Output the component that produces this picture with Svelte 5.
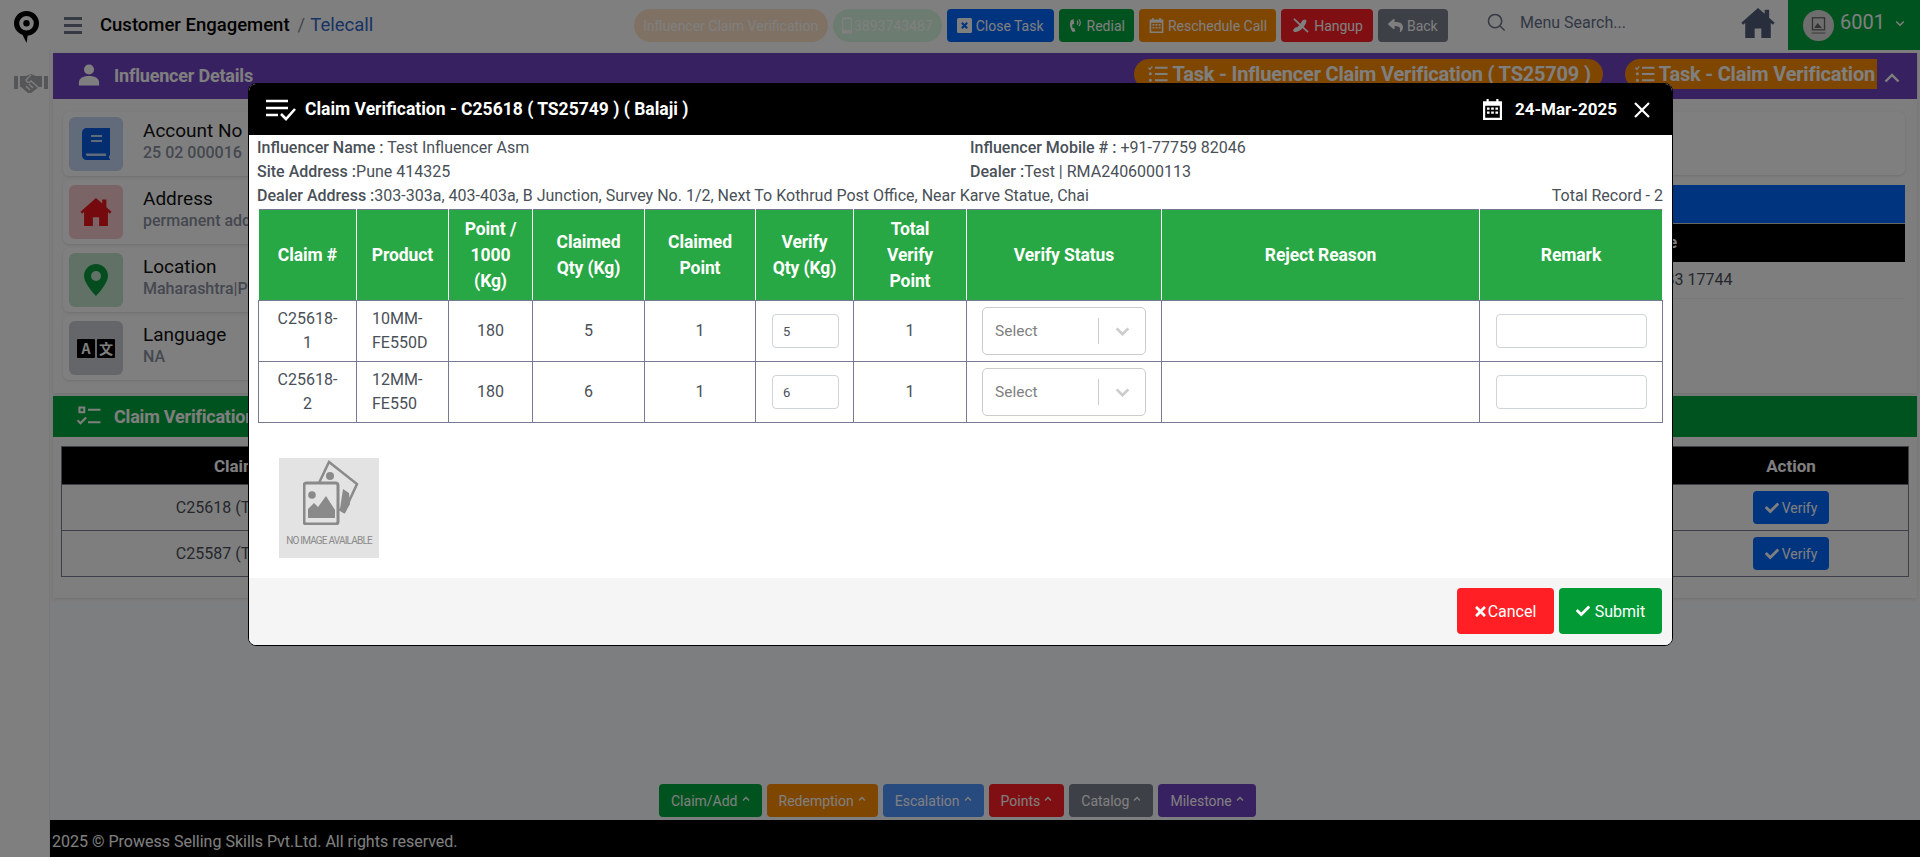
<script>
  const d = {
    check: "M173.9 439.4 7.5 273c-10-10-10-26.2 0-36.2l36.2-36.2c10-10 26.2-10 36.2 0L192 312.7 432.1 72.6c10-10 26.2-10 36.2 0l36.2 36.2c10 10 10 26.2 0 36.2L210.1 439.4c-10 10-26.2 10-36.2 0z",
    reply: "M8.309 189.836L184.313 37.851C199.719 24.546 224 35.347 224 56.015v80.053c160.629 1.839 288 34.032 288 186.258 0 61.441-39.581 122.309-83.333 154.132-13.653 9.931-33.111-2.533-28.077-18.631 45.344-145.012-21.507-183.51-176.59-185.742V360c0 20.7-24.3 31.453-39.687 18.164l-176.004-152c-11.071-9.562-11.086-26.753 0-36.328z",
    home: "M256 40 16 252l26 30 30-26v216h136V336h96v136h136V256l30 26 26-30-80-71V64h-64v60z",
    calendar: "M120 20h50v50h172V20h50v50h80v422H40V70h80zM90 170v272h332V170zM130 210h60v50h-60zM226 210h60v50h-60zM322 210h60v50h-60zM130 300h60v50h-60zM226 300h60v50h-60zM322 300h60v50h-60z",
    tasks: "M20 80l30 30 50-60 24 20-72 88-56-54zM180 70h320v50H180zM180 230h320v50H180zM180 390h320v50H180zM20 250a40 40 0 1 0 80 0 40 40 0 1 0-80 0zM20 415a40 40 0 1 0 80 0 40 40 0 1 0-80 0z"
  };

  const headerButtons = [
    { label: "Close Task", cls: "blue", icon: "close" },
    { label: "Redial", cls: "green tight", icon: "redial" },
    { label: "Reschedule Call", cls: "orange tight-r", icon: "calendar" },
    { label: "Hangup", cls: "red", icon: "hangup" },
    { label: "Back", cls: "grey", icon: "reply" }
  ];

  const infoCards = [
    { title: "Account No", value: "25 02 000016", tone: "tone-blue", icon: "book" },
    { title: "Address", value: "permanent address", tone: "tone-red", icon: "house" },
    { title: "Location", value: "Maharashtra|Pune", tone: "tone-green", icon: "pin" },
    { title: "Language", value: "NA", tone: "tone-grey", icon: "lang" }
  ];

  const claimRows = [
    { claim: "C25618-1", product: "10MM-FE550D", rate: 180, qty: 5, point: 1, verify: 5, total: 1 },
    { claim: "C25618-2", product: "12MM-FE550", rate: 180, qty: 6, point: 1, verify: 6, total: 1 }
  ];

  const listRows = ["C25618 (TS25749)", "C25587 (TS25709)"];

  const dock = [
    { label: "Claim/Add", cls: "green" },
    { label: "Redemption", cls: "orange" },
    { label: "Escalation", cls: "sky" },
    { label: "Points", cls: "red" },
    { label: "Catalog", cls: "grey" },
    { label: "Milestone", cls: "purple" }
  ];
</script>

{#snippet checkIcon()}
  <svg class="ic-check" viewBox="0 0 512 512"><path fill="currentColor" d={d.check} /></svg>
{/snippet}

{#snippet tasksIcon()}
  <svg class="ic-tasks" viewBox="0 0 512 512"><path fill="currentColor" d={d.tasks} /></svg>
{/snippet}

<div class="page">
  <header class="topbar">
    <svg class="logo" viewBox="0 0 25 32">
      <path fill="#000" fill-rule="evenodd" d="M12.5 0C5.5 0 0 5.5 0 12.2c0 5.6 3.6 9.8 8.5 11.600L12.600 32l1-7.300C20 24 25 19 25 12.200 25 5.500 19.500 0 12.500 0zM12.500 5a7.300 7.300 0 1 1 0 14.600 7.300 7.300 0 0 1 0-14.600z" />
      <circle cx="12.500" cy="12.300" r="3.200" fill="#000" />
    </svg>
    <div class="burger"><i></i><i></i><i></i></div>
    <div class="crumb"><b>Customer Engagement</b><span class="slash">/</span><span class="sub">Telecall</span></div>

    <div class="actions">
      <span class="pill pill-tan">Influencer Claim Verification</span>
      <span class="pill pill-mint">
        <svg class="ic-phone" viewBox="0 0 12 20"><path fill="currentColor" fill-rule="evenodd" d="M2 0h8a2 2 0 0 1 2 2v16a2 2 0 0 1-2 2H2a2 2 0 0 1-2-2V2a2 2 0 0 1 2-2zM1.500 2.500v12.500h9V2.500z" /></svg>3893743487
      </span>
      {#each headerButtons as b}
        <span class="btn {b.cls}">
          {#if b.icon === "close"}
            <svg class="ic" viewBox="0 0 14 14"><rect width="14" height="14" rx="1.500" fill="currentColor" /><path d="M4.500 4.500l5 5m0-5l-5 5" stroke="#0069ff" stroke-width="2" /></svg>
          {:else if b.icon === "redial"}
            <svg class="ic" viewBox="0 0 16 16"><path fill="currentColor" d="M6 1L3 2.500C1.500 6 1.800 11 5 15l3-1-1.500-3.500-1.500.5c-.6-1.800-.6-3.200 0-4.700l1.600.3z" /><path fill="none" stroke="currentColor" stroke-width="1.300" d="M9.500 3c1.300 1 1.300 3 0 4M11.500 1.500c2.200 2 2.200 5 0 7" /></svg>
          {:else if b.icon === "calendar"}
            <svg class="ic" viewBox="40 20 432 472"><path fill="currentColor" d={d.calendar} /></svg>
          {:else if b.icon === "hangup"}
            <svg class="ic ic-wide" viewBox="0 0 18 16"><path fill="currentColor" d="M1 13.500c1-3 3-4 5-4l4-5c.5-2 2-3 4-3l1.500 1.500c-.5 3-3 7-6 9.500-2 1.500-5 2.500-7 2.500z" /><path stroke="currentColor" stroke-width="2" d="M2 1l15 14" /></svg>
          {:else}
            <svg class="ic" viewBox="0 0 512 512"><path fill="currentColor" d={d.reply} /></svg>
          {/if}
          {b.label}
        </span>
      {/each}
    </div>

    <div class="search">
      <svg class="ic-search" viewBox="0 0 20 20"><circle cx="8.500" cy="8.500" r="7" fill="none" stroke="currentColor" stroke-width="1.600" /><path d="M13.500 13.500l5 5" stroke="currentColor" stroke-width="1.600" /></svg>
      <span>Menu Search...</span>
    </div>
    <svg class="ic-home" viewBox="16 40 480 432"><path fill="currentColor" d={d.home} /></svg>
    <div class="user">
      <span class="avatar">
        <svg viewBox="0 0 36 36"><rect x="11" y="9" width="14" height="14" fill="none" stroke="#666" stroke-width="1.500" /><path d="M13 21l4-6 5 6z" fill="#666" /><rect x="10" y="26" width="16" height="1.500" fill="#888" /></svg>
      </span>
      <span class="num">6001</span>
      <svg class="chev-sm" viewBox="0 0 12 8"><path d="M1.500 1.500L6 6l4.500-4.500" fill="none" stroke="currentColor" stroke-width="1.800" /></svg>
    </div>
  </header>

  <div class="shell">
    <aside class="side">
      <svg class="ic-shake" viewBox="0 0 34 20">
        <path fill="currentColor" d="M0 3h4v13H0zM30 3h4v13h-4zM6 3h6l5-2 5 2h6v11h-3l-8 6h-3L7 14H6z" />
        <path fill="none" stroke="#fff" stroke-width="1.300" d="M17 2l-5 5c1 3 3 3 5 1l8 7M12 13l4 4M15 11l4 4" />
      </svg>
    </aside>

    <main class="main">
      <section class="panel">
        <div class="bar bar-purple">
          <svg class="ic-user" viewBox="0 0 24 24"><circle cx="12" cy="6.500" r="5.500" fill="currentColor" /><path fill="currentColor" d="M1 24v-3c0-5 4-7.500 11-7.500S23 16 23 21v3z" /></svg>
          <span class="bar-title">Influencer Details</span>
          <span class="task task-first">{@render tasksIcon()}Task - Influencer Claim Verification ( TS25709 )</span>
          <span class="task task-cut">{@render tasksIcon()}Task - Claim Verification</span>
          <svg class="chev-up" viewBox="0 0 16 10"><path d="M1.500 8.500L8 2l6.500 6.500" fill="none" stroke="currentColor" stroke-width="2.400" /></svg>
        </div>
        <div class="details">
          <div class="cards">
            {#each infoCards as c}
              <div class="card">
                <div class="tile {c.tone}">
                  {#if c.icon === "book"}
                    <svg class="tile-ic" viewBox="0 0 28 32"><path fill="#0b5de0" fill-rule="evenodd" d="M5 0h23v27l-1 1v2l1 1v1H5c-3 0-5-2-5-5V5c0-3 2-5 5-5zM4 25.500v1c0 .8.700 1.500 1.500 1.500H24v-2.500zM9 7v2h11V7zM9 12v2h11v-2z" /></svg>
                  {:else if c.icon === "house"}
                    <svg class="tile-ic house" viewBox="16 40 480 432"><path fill="#e8141c" d={d.home} /></svg>
                  {:else if c.icon === "pin"}
                    <svg class="tile-ic" viewBox="0 0 24 32"><path fill="#0b9a3c" fill-rule="evenodd" d="M12 0c6.600 0 12 5.300 12 11.800C24 20 12 32 12 32S0 20 0 11.800C0 5.300 5.400 0 12 0zm0 7a5 5 0 1 0 0 10 5 5 0 0 0 0-10z" /></svg>
                  {:else}
                    <span class="lang"><b>A</b><b>文</b></span>
                  {/if}
                </div>
                <div class="card-text">
                  <span class="card-title">{c.title}</span>
                  <span class="card-value">{c.value}</span>
                </div>
              </div>
            {/each}
          </div>
          <div class="side-info">
            <div class="card card-blank"></div>
            <div class="strip strip-blue"></div>
            <div class="strip strip-black"><span>Mobile</span></div>
            <div class="mobile-row"><span>+91-83 17744</span></div>
          </div>
        </div>
      </section>

      <section class="panel panel-list">
        <div class="bar bar-green">
          <svg class="ic-list" viewBox="0 0 26 22"><path fill="none" stroke="currentColor" stroke-width="2.200" d="M3 1.500h5v5H3zM12 4h13M1 15l3 3 6-6M12 17h13" /></svg>
          <span class="bar-title list-title">Claim Verification</span>
        </div>
        <table class="list">
          <thead>
            <tr><th class="c-claim">Claim #</th><th></th><th class="c-action">Action</th></tr>
          </thead>
          <tbody>
            {#each listRows as r}
              <tr>
                <td>{r}</td>
                <td></td>
                <td><span class="verify">{@render checkIcon()}Verify</span></td>
              </tr>
            {/each}
          </tbody>
        </table>
      </section>

      <nav class="dock">
        {#each dock as b}
          <span class="dock-btn {b.cls}">{b.label}<svg class="caret" viewBox="0 0 8 6"><path d="M1 4.500L4 1.500l3 3" fill="none" stroke="currentColor" stroke-width="1.300" /></svg></span>
        {/each}
      </nav>

      <footer class="foot">2025 © Prowess Selling Skills Pvt.Ltd. All rights reserved.</footer>
    </main>
  </div>

  <div class="backdrop">
    <div class="modal">
      <div class="modal-head">
        <svg class="ic-head" viewBox="0 0 30 22"><path fill="none" stroke="#fff" stroke-width="2.600" d="M0 2h22M0 9h22M0 16h12M15 15l5 5 9-10" /></svg>
        <span class="modal-title">Claim Verification - C25618 ( TS25749 ) ( Balaji )</span>
        <svg class="ic-cal" viewBox="40 20 432 472"><path fill="#fff" d={d.calendar} /></svg>
        <span class="modal-date">24-Mar-2025</span>
        <svg class="ic-x" viewBox="0 0 16 16"><path d="M1 1l14 14M15 1L1 15" stroke="#fff" stroke-width="2.200" /></svg>
      </div>

      <div class="modal-body">
        <div class="info">
          <div class="info-row">
            <span class="info-l"><b>Influencer Name : </b> Test Influencer Asm</span>
            <span class="info-r"><b>Influencer Mobile # : </b> +91-77759 82046</span>
          </div>
          <div class="info-row">
            <span class="info-l"><b>Site Address :</b>Pune 414325</span>
            <span class="info-r"><b>Dealer :</b>Test | RMA2406000113</span>
          </div>
          <div class="info-row between">
            <span><b>Dealer Address :</b>303-303a, 403-403a, B Junction, Survey No. 1/2, Next To Kothrud Post Office, Near Karve Statue, Chai</span>
            <span>Total Record - 2</span>
          </div>
        </div>

        <table class="claims">
          <colgroup>
            <col class="w1" /><col class="w2" /><col class="w3" /><col class="w4" /><col class="w5" />
            <col class="w6" /><col class="w7" /><col class="w8" /><col class="w9" /><col class="w10" />
          </colgroup>
          <thead>
            <tr>
              <th>Claim #</th><th>Product</th><th>Point&nbsp;/ 1000 (Kg)</th><th>Claimed Qty (Kg)</th><th>Claimed Point</th>
              <th>Verify Qty (Kg)</th><th>Total Verify Point</th><th>Verify Status</th><th>Reject Reason</th><th>Remark</th>
            </tr>
          </thead>
          <tbody>
            {#each claimRows as r}
              <tr>
                <td>{r.claim}</td>
                <td class="left">{r.product}</td>
                <td>{r.rate}</td>
                <td>{r.qty}</td>
                <td>{r.point}</td>
                <td><input class="field qty" value={r.verify} /></td>
                <td>{r.total}</td>
                <td>
                  <div class="select">
                    <span class="placeholder">Select</span>
                    <i class="sep"></i>
                    <svg class="sel-chev" viewBox="0 0 16 10"><path d="M1.500 1.500L8 8l6.500-6.500" fill="none" stroke="#ccc" stroke-width="3" /></svg>
                  </div>
                </td>
                <td></td>
                <td><input class="field remark" /></td>
              </tr>
            {/each}
          </tbody>
        </table>

        <div class="noimg">
          <svg class="noimg-art" viewBox="0 0 56 66">
            <g fill="none" stroke="#8a8a8a" stroke-width="2.500">
              <path d="M16 24L26 3l28 22-13 28-5-3" />
              <rect x="1" y="24" width="34" height="41" rx="2.500" stroke-width="3" />
            </g>
            <circle cx="27" cy="17" r="4" fill="#8a8a8a" />
            <path d="M40 30l6 4 1 11-5 9-5-4z" fill="#8a8a8a" />
            <circle cx="9" cy="36" r="3.800" fill="#8a8a8a" />
            <path d="M5 59V50l6-6 4 4 8-11 9 14v8z" fill="#8a8a8a" />
          </svg>
          <span class="noimg-text">NO IMAGE AVAILABLE</span>
        </div>
      </div>

      <div class="modal-foot">
        <span class="act cancel">
          <svg class="ic-times" viewBox="0 0 352 512"><path fill="#fff" d="M242.720 256l100.070-100.070c12.280-12.280 12.280-32.190 0-44.480l-22.240-22.240c-12.280-12.280-32.190-12.280-44.480 0L176 189.280 75.930 89.210c-12.280-12.280-32.190-12.280-44.480 0L9.210 111.450c-12.280 12.280-12.280 32.190 0 44.480L109.280 256 9.210 356.070c-12.280 12.280-12.280 32.190 0 44.480l22.240 22.240c12.280 12.280 32.200 12.280 44.480 0L176 322.720l100.070 100.070c12.280 12.280 32.200 12.280 44.480 0l22.240-22.240c12.280-12.280 12.280-32.190 0-44.480L242.720 256z" /></svg>Cancel
        </span>
        <span class="act submit">{@render checkIcon()} Submit</span>
      </div>
    </div>
  </div>
</div>

<style>
  :global(body) {
    margin: 0;
    font-family: Roboto, "Liberation Sans", sans-serif;
    background: #fbfcfe;
  }
  .page {
    position: relative;
    height: 857px;
    overflow: hidden;
    display: flex;
    flex-direction: column;
    color: #495057;
    font-size: 16px;
  }

  /* top bar */
  .topbar {
    height: 50px;
    flex: none;
    display: flex;
    align-items: center;
    background: #fff;
  }
  .logo { width: 25px; height: 32px; margin: 4px 0 0 14px; flex: none; }
  .burger { width: 18px; margin-left: 25px; display: flex; flex-direction: column; gap: 4px; }
  .burger i { height: 3px; background: #6a7488; }
  .crumb { margin-left: 18px; font-size: 18.500px; color: #000; white-space: nowrap; }
  .crumb b { font-weight: 500; }
  .slash { margin: 0 5px 0 8px; color: #8a8f98; }
  .sub { color: #2e66c9; }
  .actions { position: absolute; left: 634px; top: 9px; display: flex; gap: 5px; }
  .pill {
    height: 33px;
    display: flex;
    align-items: center;
    border-radius: 17px;
    font-size: 14px;
    color: #fff;
    white-space: nowrap;
  }
  .pill-tan { background: #ffe3c6; padding: 0 10px 0 9px; width: 175px; }
  .pill-mint { background: #d8f8e0; padding: 0 9px; gap: 2px; }
  .ic-phone { width: 10px; height: 17px; }
  .btn {
    height: 33px;
    display: flex;
    align-items: center;
    gap: 4px;
    padding: 0 10px;
    border-radius: 4px;
    color: #fff;
    font-size: 14px;
    white-space: nowrap;
  }
  .btn.tight { padding: 0 9px; }
  .btn.tight-r { padding-right: 9px; }
  .ic { width: 15px; height: 15px; flex: none; }
  .ic-wide { width: 19px; }
  .blue { background: #0069ff; }
  .green { background: #00a63c; }
  .orange { background: #ff8c00; }
  .red { background: #ff1f24; }
  .grey { background: #7c8090; }
  .sky { background: #4f94ff; }
  .purple { background: #6f42c1; }
  .search { position: absolute; left: 1487px; top: 13px; display: flex; align-items: center; gap: 14px; font-size: 16px; color: #66708a; }
  .ic-search { width: 19px; height: 19px; color: #6c7484; }
  .ic-home { position: absolute; left: 1741px; top: 8px; width: 34px; height: 30px; color: #525d78; }
  .user {
    margin-left: auto;
    width: 132px;
    height: 50px;
    background: #00a63c;
    color: #fff;
    display: flex;
    align-items: flex-start;
    box-sizing: border-box;
    padding: 10px 0 0 15px;
  }
  .avatar { width: 31px; height: 31px; border-radius: 50%; background: #dcdcdc; flex: none; }
  .avatar svg { width: 31px; height: 31px; display: block; }
  .num { font-size: 20px; margin: 0 0 0 6px; line-height: 24px; color: #fff; }
  .chev-sm { width: 10px; height: 7px; margin: 10px 0 0 10px; }

  /* background page */
  .shell { flex: 1; display: flex; min-height: 0; }
  .side { width: 50px; flex: none; background: #fff; border-right: 1px solid #f0f0f0; box-sizing: border-box; padding: 23px 0 0 14px; }
  .ic-shake { width: 34px; height: 20px; color: #aaacb0; }
  .main { flex: 1; min-width: 0; display: flex; flex-direction: column; }
  .panel {
    margin: 3px 3px 0 3px;
    background: #fdfdfe;
    box-shadow: 0 1px 3px rgba(0, 0, 0, .12);
    flex: none;
  }
  .bar {
    display: flex;
    align-items: center;
    color: #fff;
    padding-left: 25px;
    box-sizing: border-box;
  }
  .bar-purple { height: 46px; background: #6f42c1; }
  .bar-green { height: 41px; background: #00a63c; }
  .ic-user { width: 22px; height: 23px; margin-top: -3px; }
  .ic-list { width: 26px; height: 21px; margin-left: -2px; }
  .bar-title { font-size: 18px; font-weight: 700; margin-left: 14px; margin-top: -2px; letter-spacing: -.2px; }
  .list-title { margin-left: 12px; margin-top: 0; }
  .task {
    height: 30px;
    margin-top: -4px;
    display: flex;
    align-items: center;
    gap: 4px;
    background: #ff8c00;
    border-radius: 15px;
    padding: 0 12px 0 14px;
    font-size: 20px;
    font-weight: 700;
    white-space: nowrap;
    letter-spacing: -.2px;
  }
  .task-first { margin-left: auto; }
  .task-cut { margin-left: 22px; border-radius: 15px 0 0 15px; padding: 0 2px 0 10px; }
  .ic-tasks { width: 20px; height: 20px; flex: none; }
  .chev-up { width: 16px; height: 10px; margin: 3px 17px 0 7px; }

  .details { display: grid; grid-template-columns: 900px 1fr; padding: 13px 12px 13px 10px; gap: 8px; }
  .cards { display: flex; flex-direction: column; gap: 4px; }
  .card {
    height: 64px;
    box-sizing: border-box;
    background: #fff;
    border-radius: 6px;
    box-shadow: 0 1px 3px rgba(0, 0, 0, .12);
    padding: 4px 6px;
    display: flex;
    align-items: center;
  }
  .card-blank { height: 63px; }
  .tile {
    width: 54px;
    height: 54px;
    border-radius: 6px;
    display: flex;
    align-items: center;
    justify-content: center;
    flex: none;
  }
  .tone-blue { background: #c5d6f2; }
  .tone-red { background: #f7c9ca; }
  .tone-green { background: #c2e2cc; }
  .tone-grey { background: #c8ccd2; }
  .tile-ic { width: 28px; height: 32px; }
  .house { width: 34px; height: 28px; }
  .lang { display: flex; gap: 2px; }
  .lang b {
    width: 18px;
    height: 19px;
    background: #000;
    color: #fff;
    font: 700 14px/19px "Noto Sans CJK SC", Roboto, sans-serif;
    text-align: center;
    border-radius: 1px;
  }
  .card-text { margin: -6px 0 0 20px; display: flex; flex-direction: column; }
  .card-title { font-size: 19px; line-height: 24px; color: #111; }
  .card-value { font-size: 16px; font-weight: 500; line-height: 20px; color: #8a90a0; white-space: nowrap; }
  .side-info { display: flex; flex-direction: column; }
  .strip { height: 38px; }
  .strip-blue { margin-top: 10px; background: #0069ff; border-bottom: 1px solid #ccc; }
  .strip-black { background: #000; color: #fff; font-weight: 700; font-size: 16px; line-height: 38px; padding-left: 657px; }
  .mobile-row { padding: 8px 0 0 663px; height: 37px; box-sizing: border-box; border-bottom: 1px solid #eee; font-size: 16px; white-space: nowrap; }

  .panel-list { padding-bottom: 21px; }
  table.list {
    margin: 9px 8px 0 8px;
    width: calc(100% - 16px);
    border-collapse: collapse;
    border: 1px solid #7a7e92;
    font-size: 16px;
    table-layout: fixed;
  }
  .list th { height: 37px; background: #000; color: #fff; font-size: 17px; font-weight: 700; padding: 0; }
  .list td { height: 45px; text-align: center; padding: 0; border-top: 1px solid #7a7e92; }
  .c-claim { width: 362px; }
  .c-action { width: 234px; }
  .verify {
    display: inline-flex;
    align-items: center;
    justify-content: center;
    gap: 3px;
    width: 76px;
    height: 33px;
    border-radius: 4px;
    background: #0069ff;
    color: #fff;
    font-size: 14px;
    vertical-align: middle;
  }
  .ic-check { width: 14px; height: 14px; flex: none; }

  .dock { margin-top: auto; height: 33px; display: flex; gap: 5px; padding: 0 0 3px 609px; flex: none; }
  .dock-btn {
    height: 33px;
    display: flex;
    align-items: center;
    gap: 4px;
    padding: 0 12px;
    border-radius: 4px;
    color: #fff;
    font-size: 14px;
    white-space: nowrap;
  }
  .caret { width: 8px; height: 6px; margin-top: -3px; }
  .foot {
    height: 37px;
    background: #000;
    color: #fff;
    font-size: 16px;
    line-height: 43px;
    padding-left: 2px;
    flex: none;
  }

  /* modal */
  .backdrop {
    position: absolute;
    inset: 0;
    background: rgba(0, 0, 0, .5);
  }
  .modal {
    position: absolute;
    left: 248px;
    top: 83px;
    width: 1425px;
    height: 563px;
    box-sizing: border-box;
    background: #fff;
    border: 1px solid #000;
    border-radius: 8px;
    overflow: hidden;
    display: flex;
    flex-direction: column;
  }
  .modal-head {
    height: 51px;
    flex: none;
    background: #000;
    color: #fff;
    display: flex;
    align-items: center;
    padding: 0 16px 0 17px;
    font-size: 17.500px;
    font-weight: 700;
  }
  .ic-head { width: 30px; height: 22px; }
  .modal-title { margin: -2px 0 0 9px; white-space: nowrap; }
  .ic-cal { width: 19px; height: 21px; margin-left: auto; }
  .modal-date { margin-left: 13px; font-size: 17px; margin-top: -2px; }
  .ic-x { width: 16px; height: 16px; margin-left: 17px; margin-right: 6px; }
  .modal-body { flex: 1; min-height: 0; padding: 0 9px 0 8px; display: flex; flex-direction: column; }
  .info { padding-top: 1px; }
  .info-row { display: flex; height: 24px; line-height: 24px; font-size: 16px; white-space: nowrap; }
  .info-row b { font-weight: 500; }
  .info-l { width: 713px; }
  .between { justify-content: space-between; }
  table.claims {
    width: 1404px;
    margin-left: 1px;
    table-layout: fixed;
    border-collapse: collapse;
    border: 1px solid #777b92;
    font-size: 16px;
    margin-top: 1px;
    flex: none;
  }
  .w1 { width: 98px; } .w2 { width: 92px; } .w3 { width: 84px; } .w4 { width: 112px; } .w5 { width: 111px; }
  .w6 { width: 98px; } .w7 { width: 113px; } .w8 { width: 195px; } .w9 { width: 318px; } .w10 { width: 183px; }
  .claims th {
    height: 91px;
    box-sizing: border-box;
    background: #28a745;
    color: #fff;
    font-size: 17.500px;
    font-weight: 700;
    line-height: 26px;
    padding: 0 12px;
    border-left: 1px solid #fff;
    border-right: 1px solid #fff;
    border-bottom: 1px solid #777b92;
    letter-spacing: -.1px;
  }
  .claims td {
    height: 60px;
    padding: 0 16px;
    text-align: center;
    line-height: 24px;
    border: 1px solid #777b92;
    overflow-wrap: anywhere;
  }
  .claims td.left { text-align: left; padding-left: 15px; }
  .field {
    display: block;
    box-sizing: border-box;
    height: 34px;
    border: 1px solid #ced4da;
    border-radius: 4px;
    background: #fff;
    font: 13px Roboto, sans-serif;
    color: #495057;
    padding: 0 10px;
    outline: none;
  }
  .qty { width: 67px; margin: 0 auto; }
  .remark { width: 151px; margin: 0 auto; }
  .select {
    box-sizing: border-box;
    width: 164px;
    height: 48px;
    margin: 0 0 0 -1px;
    border: 1px solid #ccc;
    border-radius: 5px;
    display: flex;
    align-items: center;
    padding-left: 12px;
    font-size: 15.500px;
  }
  .placeholder { color: #808080; }
  .sep { width: 1px; height: 26px; background: #ccc; margin-left: auto; }
  .sel-chev { width: 15px; height: 9px; margin: 0 15px 0 16px; }
  .noimg {
    width: 100px;
    height: 100px;
    margin: 35px 0 0 22px;
    background: #e3e3e3;
    display: flex;
    flex-direction: column;
    align-items: center;
    flex: none;
  }
  .noimg-art { width: 56px; height: 66px; margin-top: 1px; margin-left: 4px; }
  .noimg-text { font-size: 10px; color: #8a8a8a; margin-top: 10px; white-space: nowrap; letter-spacing: -.8px; }
  .modal-foot {
    height: 67px;
    flex: none;
    background: #f5f5f5;
    display: flex;
    justify-content: flex-end;
    align-items: flex-start;
    gap: 5px;
    padding: 10px 10px 0 0;
    box-sizing: border-box;
  }
  .act {
    height: 46px;
    border-radius: 4px;
    color: #fff;
    font-size: 16px;
    display: flex;
    align-items: center;
    justify-content: center;
    gap: 2px;
  }
  .cancel { width: 97px; background: #ff1f24; }
  .submit { width: 103px; background: #029a35; gap: 5px; }
  .ic-times { width: 11px; height: 15px; }
</style>
